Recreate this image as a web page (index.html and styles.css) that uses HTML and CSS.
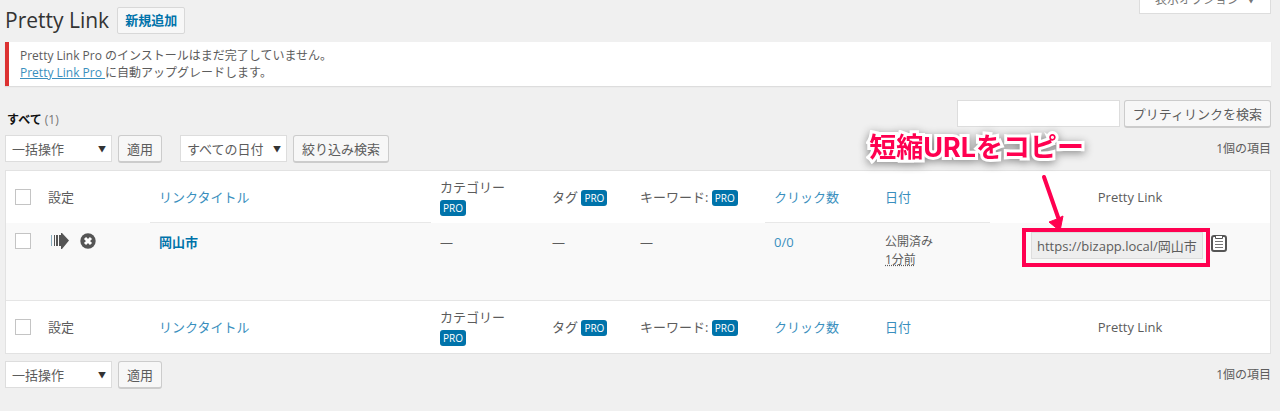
FILE: index.html
```html
<!DOCTYPE html>
<html lang="ja">
<head>
<meta charset="utf-8">
<title>Pretty Link</title>
<link rel="stylesheet" href="styles.css">
</head>
<body>
<main class="wrap">
  <button type="button" class="screen-options">表示オプション <span class="caret">▼</span></button>

  <header class="page-head">
    <h1>Pretty Link</h1>
    <a href="#new" class="add-new">新規追加</a>
  </header>

  <div class="notice">
    <p>Pretty Link Pro のインストールはまだ完了していません。</p>
    <p><a href="#upgrade">Pretty Link Pro </a>に自動アップグレードします。</p>
  </div>

  <div class="filter-bar">
    <p class="views"><strong>すべて</strong> (1)</p>
    <form class="search">
      <input type="search" class="search-box" aria-label="プリティリンクを検索">
      <button type="button" class="btn">プリティリンクを検索</button>
    </form>
  </div>

  <div class="tablenav">
    <div class="group">
      <span class="pick"><select aria-label="一括操作"><option>一括操作</option></select></span>
      <button type="button" class="btn">適用</button>
    </div>
    <div class="group">
      <span class="pick"><select aria-label="日付で絞り込む"><option>すべての日付</option></select></span>
      <button type="button" class="btn">絞り込み検索</button>
    </div>
    <span class="count">1個の項目</span>
    <strong class="callout">短縮URLをコピー</strong>
  </div>

  <table class="links">
    <colgroup>
      <col class="c-check"><col class="c-set"><col class="c-title"><col class="c-cat"><col class="c-tag"><col class="c-key"><col class="c-click"><col class="c-date"><col class="c-link">
    </colgroup>
    <thead>
      <tr>
        <th><input type="checkbox" aria-label="すべて選択"></th>
        <th>設定</th>
        <th class="sortable"><a href="#title">リンクタイトル</a></th>
        <th>カテゴリー <span class="pro">PRO</span></th>
        <th>タグ <span class="pro">PRO</span></th>
        <th>キーワード: <span class="pro">PRO</span></th>
        <th class="sortable"><a href="#clicks">クリック数</a></th>
        <th class="sortable"><a href="#date">日付</a></th>
        <th class="center">Pretty Link</th>
      </tr>
    </thead>
    <tbody>
      <tr>
        <td><input type="checkbox" aria-label="岡山市を選択"></td>
        <td>
          <span class="icons">
            <svg width="18" height="16" viewBox="0 0 18 16" role="img" aria-label="リダイレクト"><path d="M0 2h1v11H0z" fill="#8ab"/><path d="M3 2h1v11H3zM5 2h2v11H5zM8 2h2V0h1l7 7.500-7 8.500h-1v-3H8z" fill="#555"/></svg>
            <svg width="16" height="16" viewBox="0 0 16 16" role="img" aria-label="無効"><circle cx="8" cy="8" r="7.700" fill="#555"/><path d="M5 5l6 6M11 5l-6 6" stroke="#fff" stroke-width="3"/></svg>
          </span>
        </td>
        <td><a href="#edit" class="row-title">岡山市</a></td>
        <td>—</td>
        <td>—</td>
        <td>—</td>
        <td><a href="#hits">0/0</a></td>
        <td class="date">公開済み<br><abbr title="1分前">1分前</abbr></td>
        <td>
          <div class="copy">
            <div class="marked">
              <input type="text" readonly value="https://bizapp.local/岡山市" aria-label="Pretty Link">
              <svg class="arrow" width="26" height="58" viewBox="0 0 26 58" aria-hidden="true"><path d="M3 3l15 43" stroke="#ff0050" stroke-width="4" stroke-linecap="round"/><path d="M8 48l8-3 6-3-3 15z" fill="#ff0050" stroke="#ff0050"/></svg>
            </div>
            <button type="button" class="clip" aria-label="コピー">
              <svg width="16" height="17" viewBox="0 0 16 17" fill="none" stroke="#555"><rect x="1" y="1" width="14" height="15" rx="2" stroke-width="2" fill="#fff"/><path d="M4.500 1v2.500h7V1" fill="#fff"/><path d="M4 6.500h8M4 9.500h8M4 12.500h8" stroke="#777"/></svg>
            </button>
          </div>
        </td>
      </tr>
    </tbody>
    <tfoot>
      <tr>
        <th><input type="checkbox" aria-label="すべて選択"></th>
        <th>設定</th>
        <th><a href="#title">リンクタイトル</a></th>
        <th>カテゴリー <span class="pro">PRO</span></th>
        <th>タグ <span class="pro">PRO</span></th>
        <th>キーワード: <span class="pro">PRO</span></th>
        <th><a href="#clicks">クリック数</a></th>
        <th><a href="#date">日付</a></th>
        <th class="center">Pretty Link</th>
      </tr>
    </tfoot>
  </table>

  <div class="tablenav">
    <div class="group">
      <span class="pick"><select aria-label="一括操作"><option>一括操作</option></select></span>
      <button type="button" class="btn">適用</button>
    </div>
    <span class="count">1個の項目</span>
  </div>
</main>
</body>
</html>
```
FILE: styles.css
```css
* { box-sizing: border-box; }

body {
  margin: 0;
  background: #f0f0f0;
  color: #5c5c5c;
  font: 13px/18px "Open Sans", "Noto Sans CJK JP", sans-serif;
}

button, input, select { font: inherit; color: inherit; }
a { color: #3a8fbe; text-decoration: none; }
p { margin: 0; }

.wrap {
  position: relative;
  padding: 4px 9px 20px 5px;
}

.screen-options {
  position: absolute;
  top: -14px;
  right: 9px;
  height: 28px;
  padding: 0 15px;
  border: 1px solid #ddd;
  background: #fff;
  color: #777;
  font-size: 12px;
}
.caret { margin-left: 5px; font-size: 8px; vertical-align: 1px; }

.page-head {
  display: flex;
  align-items: center;
  gap: 8px;
  height: 32px;
}
h1 {
  margin: 0;
  color: #333;
  font-size: 21px;
  font-weight: 400;
  line-height: 28px;
}
.add-new {
  padding: 3px 7px;
  border: 1px solid #d8d8d8;
  border-radius: 2px;
  background: #f7f7f7;
  color: #0073aa;
  font-size: 13px;
  font-weight: 700;
  line-height: 19px;
}

.notice {
  margin-top: 6px;
  padding: 5px 11px;
  border-left: 4px solid #dc3232;
  background: #fff;
  box-shadow: 0 1px 1px #ddd;
  font-size: 12px;
  line-height: 17px;
}
.notice a { text-decoration: underline; }

.filter-bar {
  display: flex;
  justify-content: space-between;
  align-items: flex-end;
  margin-top: 14px;
}
.views { padding: 0 2px; color: #777; font-size: 12px; line-height: 16px; }
.views strong { color: #111; }
.search { display: flex; gap: 4px; }
.search-box {
  width: 163px;
  height: 27px;
  padding: 0 5px;
  border: 1px solid #ddd;
  background: #fff;
}
.btn {
  height: 28px;
  padding: 0 8px;
  border: 1px solid #ccc;
  border-bottom-width: 2px;
  border-radius: 3px;
  background: #f7f7f7;
}

.tablenav {
  position: relative;
  display: flex;
  align-items: center;
  gap: 18px;
  margin: 7px 0;
}
.group { display: flex; gap: 6px; }
.pick { position: relative; }
.pick::after {
  content: "▼";
  position: absolute;
  top: 5px;
  right: 6px;
  color: #333;
  font-size: 8px;
  pointer-events: none;
}
.pick select {
  width: 107px;
  height: 27px;
  padding: 0 6px;
  border: 1px solid #ddd;
  border-radius: 0;
  background: #fff;
  appearance: none;
}
.count { margin-left: auto; font-size: 12px; }

.callout {
  position: absolute;
  right: 187px;
  top: -4px;
  color: #ff0050;
  font: 700 27px/34px Inter, "Noto Sans CJK JP", sans-serif;
  -webkit-text-stroke: 6px #fff;
  paint-order: stroke fill;
  filter: drop-shadow(0 2px 4px #888);
}

.links {
  width: 100%;
  table-layout: fixed;
  border: 1px solid #e2e2e2;
  border-spacing: 0;
  background: #fff;
}
.c-check { width: 33px; }
.c-set { width: 111px; }
.c-cat { width: 112px; }
.c-tag { width: 88px; }
.c-key { width: 134px; }
.c-click { width: 111px; }
.c-date { width: 114px; }
.c-link { width: 280px; }

th, td { padding: 0 9px; text-align: left; font-weight: 400; }
th { height: 52px; line-height: 20px; vertical-align: middle; }
th.center { text-align: center; }
.sortable { border-bottom: 1px solid #e8e8e8; }
td {
  height: 78px;
  padding-top: 10px;
  border-bottom: 1px solid #e5e5e5;
  background: #f9f9f9;
  vertical-align: top;
}
.row-title { color: #0073aa; font-weight: 700; }
.date { font-size: 12px; }

input[type="checkbox"] {
  appearance: none;
  display: block;
  width: 16px;
  height: 16px;
  margin: 0;
  border: 1px solid #c4c4c4;
  background: #fff;
}
.pro {
  display: inline-block;
  padding: 0 3px;
  border-radius: 3px;
  background: #0073aa;
  color: #fff;
  font-size: 10px;
  line-height: 16px;
}
.icons { display: flex; gap: 11px; padding-left: 3px; }

.copy {
  display: flex;
  align-items: flex-start;
  padding-left: 23px;
  margin-top: -5px;
}
.marked {
  position: relative;
  padding: 0 3px 4px 5px;
  border: 4px solid #ff0050;
}
.marked input {
  display: block;
  width: 172px;
  height: 27px;
  padding: 0 5px;
  border: 1px solid #ddd;
  background: #eee;
  font-size: 13px;
}
.arrow { position: absolute; left: 15px; bottom: 100%; }
.clip { display: block; margin: 7px 0 0 1px; padding: 0; border: 0; background: none; line-height: 0; }
```
